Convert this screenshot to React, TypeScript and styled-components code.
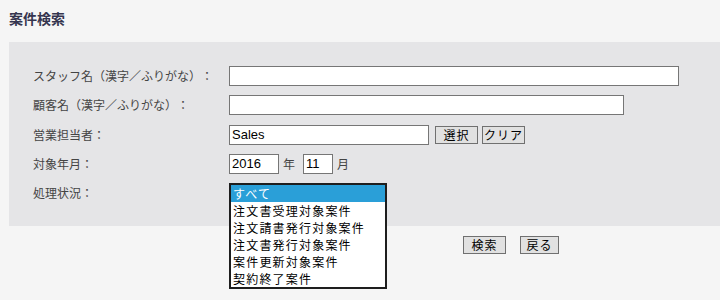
import React from "react";
import styled, { createGlobalStyle } from "styled-components";

const Global = createGlobalStyle`
  html, body { margin: 0; padding: 0; background: #f5f5f5; }
  body { font-family: "Noto Sans CJK JP", "Noto Sans", sans-serif; color: #444; text-spacing-trim: space-all; }
  * { box-sizing: border-box; }
`;

const Page = styled.div`
  width: 720px;
  height: 300px;
  background: #f5f5f5;
  overflow: hidden;
`;

const Title = styled.h2`
  margin: 0 0 14px 0;
  padding: 8px 9px 0;
  font-size: 14px;
  line-height: 20px;
  font-weight: bold;
  color: #35354f;
`;

const Panel = styled.div`
  margin-left: 9px;
  background: #e5e5e7;
  padding: 24px 0 23px 24px;
`;

const Form = styled.div`
  display: grid;
  grid-template-columns: 196px 1fr;
  grid-auto-rows: 20px;
  row-gap: 9.25px;
`;

const Label = styled.div`
  font-size: 12px;
  line-height: 20px;
  color: #444;
  white-space: nowrap;
  text-spacing-trim: space-all;
`;

const Control = styled.div`
  display: flex;
  align-items: center;
  position: relative;
  height: 20px;
`;

const TextInput = styled.input<{ $w: number }>`
  width: ${(p) => p.$w}px;
  height: 20px;
  margin: 0;
  padding: 0 2px;
  border: 1px solid #767676;
  background: #fff;
  font-family: "Liberation Sans", Arial, sans-serif;
  font-size: 13px;
  color: #000;
  outline: none;
`;

const Unit = styled.span`
  font-size: 12px;
  color: #444;
  margin: 0 8px 0 4px;
`;

const Button = styled.button<{ $w?: number }>`
  width: ${(p) => p.$w ?? 43}px;
  height: 18px;
  margin: 0;
  padding: 0;
  border: 1px solid #707070;
  background: #e1e1e1;
  font-family: "Noto Sans CJK JP", sans-serif;
  font-size: 12px;
  letter-spacing: 1px;
  line-height: 16px;
  color: #000;
`;

const SalesRow = styled(Control)`
  & > ${Button} { margin-left: 4px; }
  & > ${Button}:first-of-type { margin-left: 6px; }
`;

const List = styled.ul`
  position: absolute;
  left: 0;
  top: 0;
  width: 158px;
  margin: 0;
  padding: 0;
  list-style: none;
  border: 2px solid #1e1e1e;
  background: #fff;
  z-index: 2;
`;

const Option = styled.li<{ $sel?: boolean }>`
  height: 17px;
  line-height: 17px;
  padding-left: 2px;
  font-size: 12px;
  letter-spacing: 1.2px;
  white-space: nowrap;
  overflow: hidden;
  color: ${(p) => (p.$sel ? "#fff" : "#000")};
  background: ${(p) => (p.$sel ? "#2a9fd8" : "transparent")};
`;

const Actions = styled.div`
  display: flex;
  gap: 14px;
  margin-top: 10px;
  padding-left: 463px;
`;

const options = [
  "すべて",
  "注文書受理対象案件",
  "注文請書発行対象案件",
  "注文書発行対象案件",
  "案件更新対象案件",
  "契約終了案件",
];

export default function App() {
  return (
    <Page>
      <Global />
      <Title>案件検索</Title>
      <Panel>
        <Form>
          <Label>スタッフ名（漢字／ふりがな）：</Label>
          <Control>
            <TextInput $w={450} defaultValue="" />
          </Control>
          <Label>顧客名（漢字／ふりがな）：</Label>
          <Control>
            <TextInput $w={395} defaultValue="" />
          </Control>
          <Label>営業担当者：</Label>
          <SalesRow>
            <TextInput $w={200} defaultValue="Sales" />
            <Button>選択</Button>
            <Button>クリア</Button>
          </SalesRow>
          <Label>対象年月：</Label>
          <Control>
            <TextInput $w={50} defaultValue="2016" />
            <Unit>年</Unit>
            <TextInput $w={30} defaultValue="11" />
            <Unit>月</Unit>
          </Control>
          <Label>処理状況：</Label>
          <Control>
            <List>
              {options.map((o, i) => (
                <Option key={o} $sel={i === 0}>
                  {o}
                </Option>
              ))}
            </List>
          </Control>
        </Form>
      </Panel>
      <Actions>
        <Button>検索</Button>
        <Button $w={39}>戻る</Button>
      </Actions>
    </Page>
  );
}
